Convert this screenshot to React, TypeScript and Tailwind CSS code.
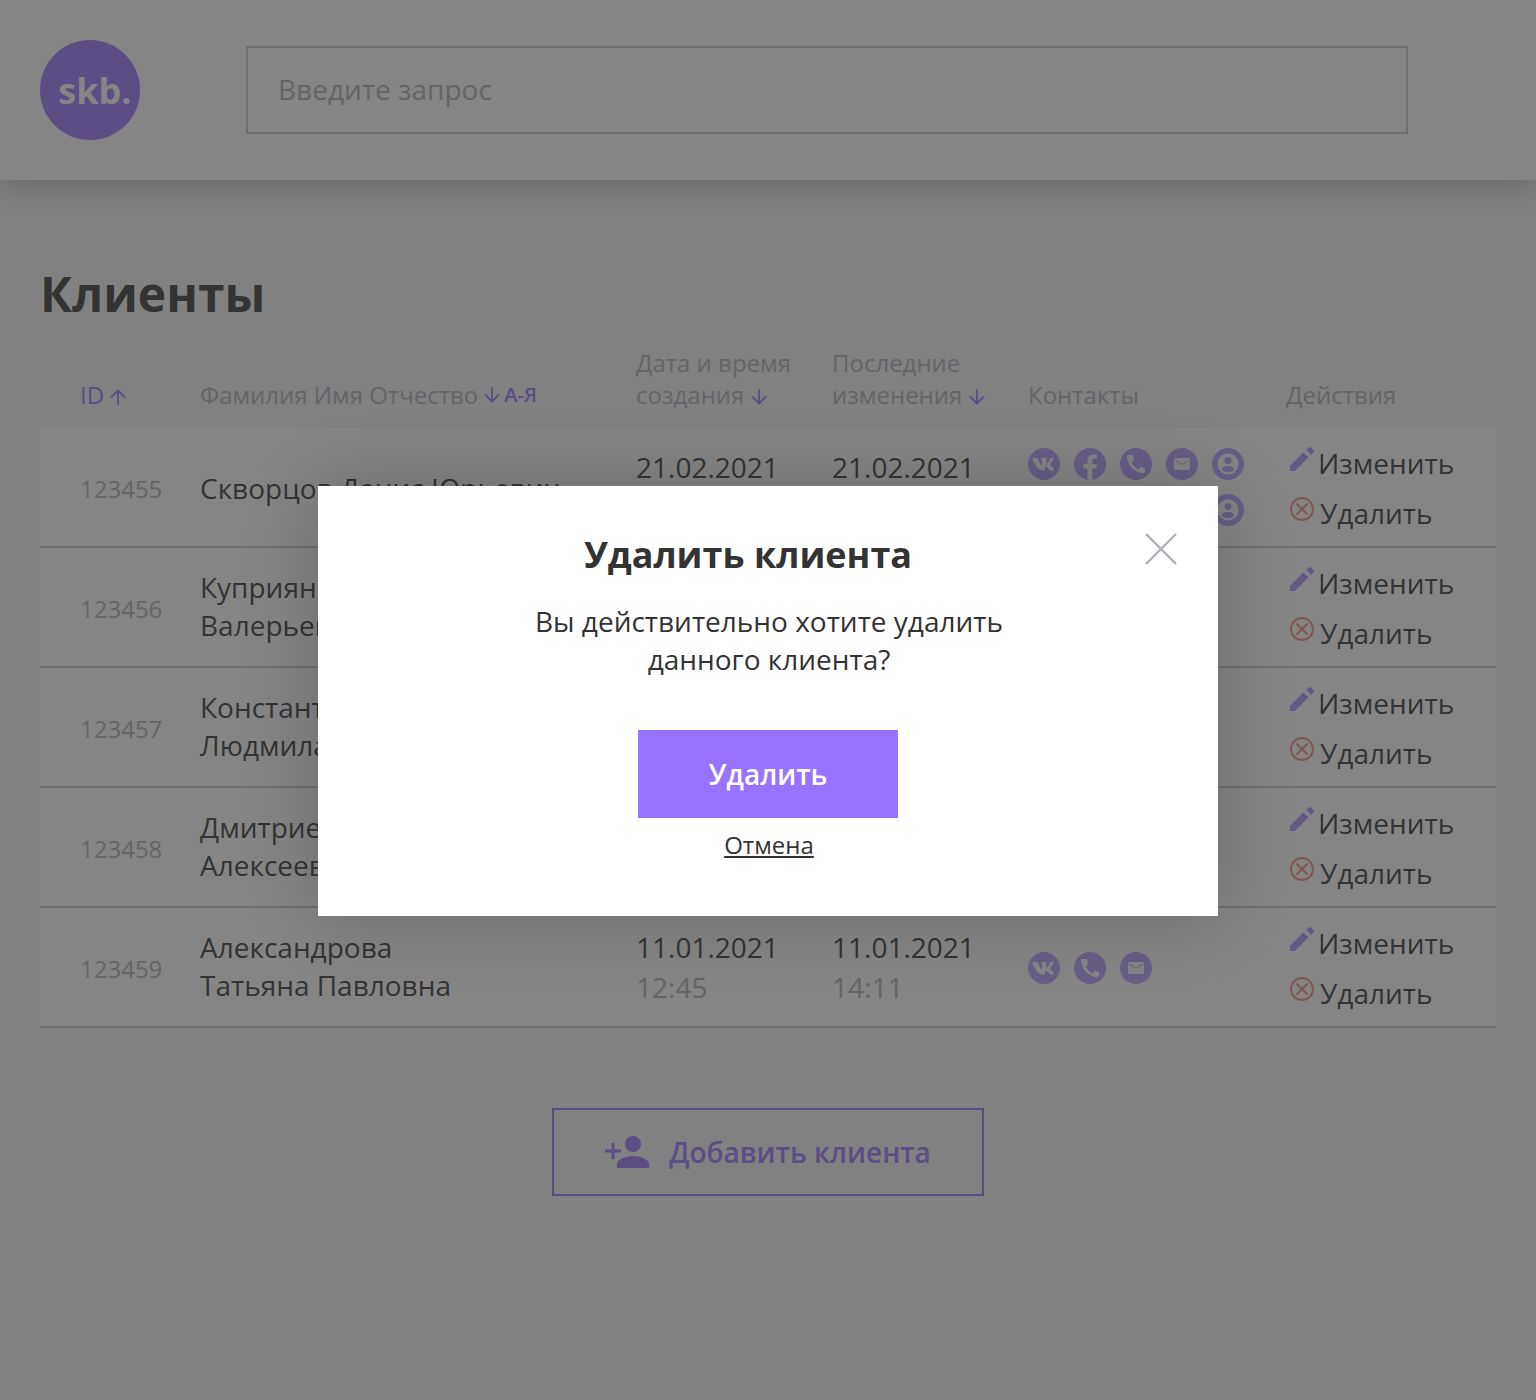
const clients = [
  { id: "123455", name: ["Скворцов Денис Юрьевич"], created: ["21.02.2021", "15:21"], updated: ["21.02.2021", "15:21"], contacts: ["vk", "fb", "phone", "mail", "user", "vk", "fb", "phone", "mail", "user"] },
  { id: "123456", name: ["Куприянов Арсений", "Валерьевич"], created: ["20.02.2021", "12:10"], updated: ["20.02.2021", "12:10"], contacts: ["vk", "phone", "mail"] },
  { id: "123457", name: ["Константинопольская", "Людмила Александровна"], created: ["18.02.2021", "10:02"], updated: ["18.02.2021", "10:02"], contacts: ["phone", "mail"] },
  { id: "123458", name: ["Дмитриевский Николай", "Алексеевич"], created: ["15.01.2021", "09:30"], updated: ["15.01.2021", "09:30"], contacts: ["vk", "mail"] },
  { id: "123459", name: ["Александрова", "Татьяна Павловна"], created: ["11.01.2021", "12:45"], updated: ["11.01.2021", "14:11"], contacts: ["vk", "phone", "mail"] },
];

function Arrow({ up = false }: { up?: boolean }) {
  return (
    <svg width="16" height="16" viewBox="0 0 16 16" fill="none" className="inline-block shrink-0 align-[-1px] text-[#9873FF]">
      <path
        d={up ? "M8 16V1.500M1 8.500l7-7 7 7" : "M8 0v14.500M1 7.500l7 7 7-7"}
        stroke="currentColor"
        strokeWidth="1.800"
      />
    </svg>
  );
}

function ContactIcon({ type }: { type: string }) {
  return (
    <svg width="32" height="32" viewBox="0 0 32 32" className="opacity-70">
      <circle cx="16" cy="16" r="16" fill="#9873FF" />
      {type === "vk" && (
        <path
          fill="#fff"
          d="M26.4 10.6c.15-.5 0-.86-.7-.86h-2.34c-.6 0-.87.32-1.02.66 0 0-1.16 2.84-2.8 4.68-.53.53-.77.7-1.06.7-.15 0-.36-.17-.36-.66v-4.52c0-.59-.17-.86-.66-.86h-3.68c-.37 0-.6.28-.6.53 0 .56.84.69.93 2.26v3.36c0 .74-.14.87-.43.87-.8 0-2.73-2.92-3.88-6.26-.22-.65-.45-.76-1.05-.76H5.4c-.67 0-.8.32-.8.66 0 .62.8 3.7 3.7 7.77 1.94 2.78 4.67 4.28 7.15 4.28 1.49 0 1.67-.33 1.67-.91v-2.1c0-.67.14-.8.61-.8.35 0 .94.17 2.33 1.51 1.59 1.59 1.85 2.3 2.74 2.3h2.34c.67 0 1-.33.81-.99-.21-.66-.97-1.61-1.98-2.74-.54-.64-1.36-1.34-1.61-1.69-.35-.45-.25-.65 0-1.05 0 0 2.86-4.03 3.16-5.4z"
        />
      )}
      {type === "fb" && (
        <path
          fill="#fff"
          d="M13.5 32V20.5h-4V16h4v-3.4c0-4 2.4-6.2 6-6.2 1.7 0 3.5.3 3.5.3v3.9h-2c-2 0-2.6 1.2-2.6 2.5V16h4.4l-.7 4.5h-3.7V32z"
        />
      )}
      {type === "phone" && (
        <path
          fill="#fff"
          d="M24.9 19.6c-1.3 0-2.5-.2-3.7-.6-.4-.1-.8 0-1.1.3l-1.6 2.1c-2.9-1.4-5.6-4-7-6.9l2-1.7c.3-.3.4-.7.3-1.1-.4-1.2-.6-2.4-.6-3.7 0-.6-.5-1-1-1H8.2C7.6 7 7 7.3 7 8c0 9.3 7.7 17 17 17 .7 0 1-.6 1-1.2v-3.2c0-.5-.5-1-1.1-1z"
        />
      )}
      {type === "mail" && (
        <>
          <rect x="8" y="10" width="16" height="12" rx="1.200" fill="#fff" />
          <path d="M9 12l7 4.500 7-4.500" fill="none" stroke="#9873FF" strokeWidth="1" />
        </>
      )}
      {type === "user" && (
        <>
          <circle cx="16" cy="16" r="10.500" fill="#fff" />
          <circle cx="16" cy="12.500" r="3.500" fill="#9873FF" />
          <ellipse cx="16" cy="21" rx="6" ry="3.300" fill="#9873FF" />
        </>
      )}
    </svg>
  );
}

function Pencil() {
  return (
    <svg width="24" height="24" viewBox="0 0 24 24" className="opacity-80">
      <path fill="#9873FF" d="M0 19v5h5L18.500 10.300l-5-5zM23.600 5.100c.5-.5.500-1.300 0-1.800L20.700.4c-.5-.5-1.300-.5-1.800 0l-2.700 2.700 5 5z" />
    </svg>
  );
}

function CancelIcon() {
  return (
    <svg width="24" height="24" viewBox="0 0 24 24" fill="none" className="opacity-75" stroke="#F06A4D" strokeWidth="2">
      <circle cx="12" cy="12" r="11" />
      <path d="M6.500 6.500l11 11M17.500 6.500l-11 11" />
    </svg>
  );
}

export default function App() {
  return (
    <div className="relative h-[1400px] overflow-hidden bg-[#F5F5F5] font-['Open_Sans',sans-serif] text-[#333333]">
      <header className="relative flex h-[180px] items-center bg-white pl-10 shadow-[0_9px_27px_rgba(0,0,0,0.22)]">
        <div className="flex h-[100px] w-[100px] shrink-0 items-center justify-center rounded-full bg-[#9873FF] pt-0.5 pl-2.5 text-[36px] font-bold text-white">
          skb.
        </div>
        <div className="ml-[106px] flex h-[88px] w-[1162px] items-center border-2 border-[#C8C5D1] pb-0.5 pl-[30px] text-[28px] text-[#B0ADB8]">
          Введите запрос
        </div>
      </header>

      <main className="px-10">
        <h1 className="mt-[81px] text-[48px] leading-[65px] font-bold">Клиенты</h1>

        <div className="mt-[21px] grid grid-cols-[160px_436px_196px_196px_258px_1fr] items-end pb-[17px] text-[24px] leading-8 text-[#B0ADB8]">
          <div className="pl-10 text-[#9873FF]">
            ID <Arrow up />
          </div>
          <div className="flex items-center">
            Фамилия Имя Отчество
            <span className="ml-1.5 flex">
              <Arrow />
            </span>
            <span className="ml-1 text-[20px] font-semibold text-[#9873FF]">А-Я</span>
          </div>
          <div>
            Дата и время
            <br />
            создания <Arrow />
          </div>
          <div>
            Последние
            <br />
            изменения <Arrow />
          </div>
          <div>Контакты</div>
          <div>Действия</div>
        </div>

        {clients.map((client) => (
          <div
            key={client.id}
            className="grid h-[120px] grid-cols-[160px_436px_196px_196px_258px_1fr] items-center border-b-2 border-[#C8C5D1] bg-white text-[28px] leading-[38px]"
          >
            <div className="pt-1 pl-10 text-[24px] text-[#B0ADB8]">{client.id}</div>
            <div className={client.name.length === 1 ? "pt-0.5 whitespace-nowrap" : "pb-0.5 whitespace-nowrap"}>
              {client.name.map((line) => (
                <div key={line}>{line}</div>
              ))}
            </div>
            <div className="flex flex-col gap-0.5">
              <span>{client.created[0]}</span>
              <span className="text-[#B0ADB8]">{client.created[1]}</span>
            </div>
            <div className="flex flex-col gap-0.5">
              <span>{client.updated[0]}</span>
              <span className="text-[#B0ADB8]">{client.updated[1]}</span>
            </div>
            <div className={client.contacts.length > 5 ? "flex w-[216px] flex-wrap gap-3.5" : "flex w-[216px] flex-wrap gap-3.5 pt-0.5"}>
              {client.contacts.map((type, i) => (
                <ContactIcon key={i} type={type} />
              ))}
            </div>
            <div className="flex flex-col gap-3 pt-0.5 pl-1">
              <div className="flex items-center gap-1">
                <span className="-mt-2 flex">
                  <Pencil />
                </span>
                Изменить
              </div>
              <div className="flex items-center gap-1.5">
                <span className="-mt-2 flex">
                  <CancelIcon />
                </span>
                Удалить
              </div>
            </div>
          </div>
        ))}

        <button className="mx-auto mt-20 flex h-[88px] w-[432px] items-center justify-center gap-5 border-2 border-[#9873FF] text-[28px] font-semibold text-[#9873FF]">
          <svg width="44" height="32" viewBox="0 0 44 32" fill="#9873FF">
            <circle cx="28" cy="8" r="8" />
            <path d="M12 32v-4c0-5.300 10.700-8 16-8s16 2.700 16 8v4zM6.500 13.500V7h3v6.500H16v3H9.500V23h-3v-6.500H0v-3z" />
          </svg>
          Добавить клиента
        </button>
      </main>

      <div className="absolute inset-0 flex items-center justify-center bg-[#333333]/60 pt-0.5">
        <div className="relative flex h-[430px] w-[900px] flex-col items-center bg-white pt-[44px] shadow-[0_0_70px_rgba(0,0,0,0.2)]">
          <svg width="34" height="34" viewBox="0 0 34 34" fill="none" className="absolute top-[46px] right-10" stroke="#B0ADB8" strokeWidth="2.400">
            <path d="M2 2l30 30M32 2L2 32" />
          </svg>
          <h2 className="-translate-x-5 text-[36px] leading-[50px] font-bold">Удалить клиента</h2>
          <p className="mt-[22px] translate-x-px text-center text-[28px] leading-[38px]">
            Вы действительно хотите удалить
            <br />
            данного клиента?
          </p>
          <button className="mt-[52px] h-[88px] w-[260px] bg-[#9873FF] text-[28px] font-semibold text-white">
            Удалить
          </button>
          <a className="mt-2.5 translate-x-px text-[24px] leading-[33px] underline">Отмена</a>
        </div>
      </div>
    </div>
  );
}
